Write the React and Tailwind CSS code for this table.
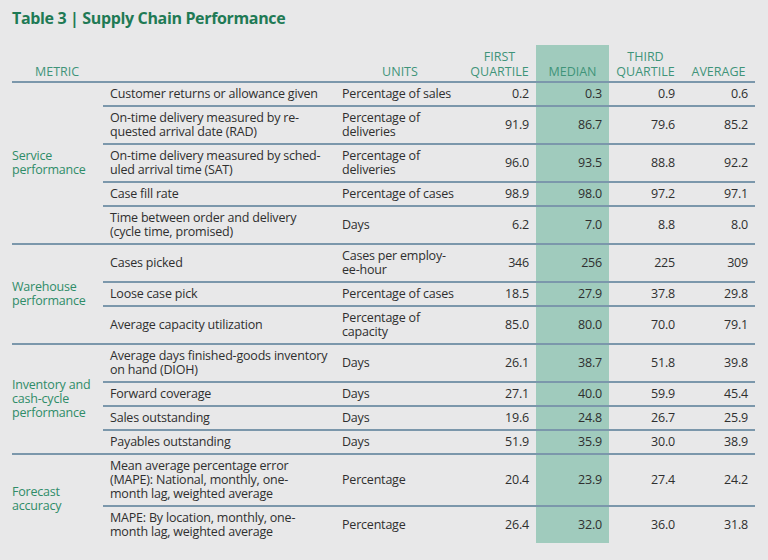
import React from 'react';

const groups = [
  {
    label: ['Service', 'performance'],
    rows: [
      { metric: ['Customer returns or allowance given'], units: ['Percentage of sales'], v: ['0.2', '0.3', '0.9', '0.6'] },
      { metric: ['On-time delivery measured by re-', 'quested arrival date (RAD)'], units: ['Percentage of', 'deliveries'], v: ['91.9', '86.7', '79.6', '85.2'] },
      { metric: ['On-time delivery measured by sched-', 'uled arrival time (SAT)'], units: ['Percentage of', 'deliveries'], v: ['96.0', '93.5', '88.8', '92.2'] },
      { metric: ['Case fill rate'], units: ['Percentage of cases'], v: ['98.9', '98.0', '97.2', '97.1'] },
      { metric: ['Time between order and delivery', '(cycle time, promised)'], units: ['Days'], v: ['6.2', '7.0', '8.8', '8.0'] },
    ],
  },
  {
    label: ['Warehouse', 'performance'],
    rows: [
      { metric: ['Cases picked'], units: ['Cases per employ-', 'ee-hour'], v: ['346', '256', '225', '309'] },
      { metric: ['Loose case pick'], units: ['Percentage of cases'], v: ['18.5', '27.9', '37.8', '29.8'] },
      { metric: ['Average capacity utilization'], units: ['Percentage of', 'capacity'], v: ['85.0', '80.0', '70.0', '79.1'] },
    ],
  },
  {
    label: ['Inventory and', 'cash-cycle', 'performance'],
    rows: [
      { metric: ['Average days finished-goods inventory', 'on hand (DIOH)'], units: ['Days'], v: ['26.1', '38.7', '51.8', '39.8'] },
      { metric: ['Forward coverage'], units: ['Days'], v: ['27.1', '40.0', '59.9', '45.4'] },
      { metric: ['Sales outstanding'], units: ['Days'], v: ['19.6', '24.8', '26.7', '25.9'] },
      { metric: ['Payables outstanding'], units: ['Days'], v: ['51.9', '35.9', '30.0', '38.9'] },
    ],
  },
  {
    label: ['Forecast', 'accuracy'],
    rows: [
      { metric: ['Mean average percentage error', '(MAPE): National, monthly, one-', 'month lag, weighted average'], units: ['Percentage'], v: ['20.4', '23.9', '27.4', '24.2'] },
      { metric: ['MAPE: By location, monthly, one-', 'month lag, weighted average'], units: ['Percentage'], v: ['26.4', '32.0', '36.0', '31.8'] },
    ],
  },
];

const Lines = ({ items }) =>
  items.map((t, i) => (
    <React.Fragment key={i}>
      {i > 0 && <br />}
      {t}
    </React.Fragment>
  ));

export default function App() {
  return (
    <div className="w-[768px] h-[560px] overflow-hidden bg-[#e8e8e9] pl-3 pt-[7px] font-['Open_Sans',sans-serif] text-[#2f2f2f]">
      <h1 className="h-[38px] text-[16px] font-bold leading-[22px] tracking-[-0.35px] text-[#1f7a55]">
        Table 3 | Supply Chain Performance
      </h1>

      <table className="w-[743px] table-fixed border-collapse text-[12.5px] leading-[14px] tracking-[-0.2px]">
        <colgroup>
          <col className="w-[91px]" />
          <col className="w-[234px]" />
          <col className="w-[126px]" />
          <col className="w-[73px]" />
          <col className="w-[73px]" />
          <col className="w-[73px]" />
          <col className="w-[73px]" />
        </colgroup>
        <thead>
          <tr className="border-b-2 border-[#7b97ab] text-[12.5px] uppercase leading-[15px] tracking-normal text-[#3f9479]">
            <th className="pt-[4px] pb-[2px] pl-[23px] text-left align-bottom font-normal" colSpan={2}>Metric</th>
            <th className="pt-[4px] pb-[2px] text-center align-bottom font-normal">Units</th>
            <th className="pt-[4px] pb-[2px] text-center align-bottom font-normal">First<br />Quartile</th>
            <th className="bg-[#a0cbbd] pt-[4px] pb-[2px] text-center align-bottom font-normal">Median</th>
            <th className="pt-[4px] pb-[2px] text-center align-bottom font-normal">Third<br />Quartile</th>
            <th className="pt-[4px] pb-[2px] text-center align-bottom font-normal">Average</th>
          </tr>
        </thead>
        <tbody>
          {groups.map((g, gi) =>
            g.rows.map((r, ri) => {
              const last = gi === groups.length - 1 && ri === g.rows.length - 1;
              const line = last ? '' : 'border-b-2 border-[#7b97ab]';
              return (
                <tr key={`${gi}-${ri}`}>
                  {ri === 0 && (
                    <td
                      rowSpan={g.rows.length}
                      className={`${gi === groups.length - 1 ? '' : 'border-b-2 border-[#7b97ab]'} whitespace-nowrap align-middle text-[#2f8c68]`}
                    >
                      <Lines items={g.label} />
                    </td>
                  )}
                  <td className={`${line} whitespace-nowrap py-1 pl-[7px] align-middle`}>
                    <Lines items={r.metric} />
                  </td>
                  <td className={`${line} whitespace-nowrap py-1 pl-[5px] align-middle`}>
                    <Lines items={r.units} />
                  </td>
                  {r.v.map((v, vi) => (
                    <td
                      key={vi}
                      className={`${line} py-1 pr-[7px] text-right align-middle ${vi === 1 ? 'bg-[#a0cbbd]' : ''}`}
                    >
                      {v}
                    </td>
                  ))}
                </tr>
              );
            })
          )}
        </tbody>
      </table>
    </div>
  );
}
